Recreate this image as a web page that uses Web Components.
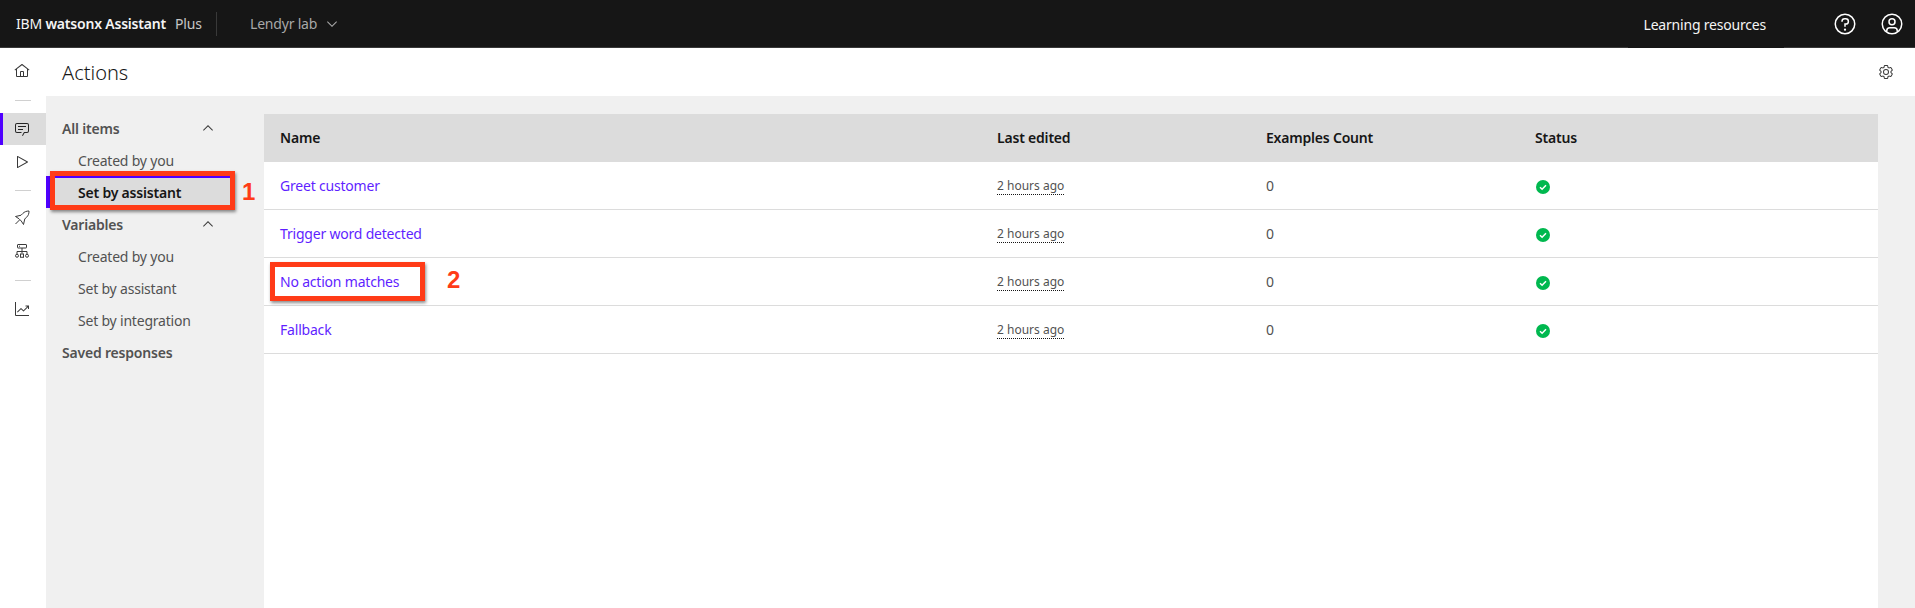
<!DOCTYPE html>
<html lang="en">
<head>
<meta charset="utf-8">
<title>Actions</title>
<style>
  html, body { margin: 0; height: 100%; }
  body { font-family: "Noto Sans", "Liberation Sans", sans-serif; font-size: 14px; letter-spacing: -0.2px; color: #161616; overflow: hidden; }
</style>
</head>
<body>
<wa-app>
  <wa-header slot="header"></wa-header>
  <wa-rail slot="rail">
    <wa-rail-item icon="home"></wa-rail-item>
    <wa-rail-divider></wa-rail-divider>
    <wa-rail-item icon="chat" active></wa-rail-item>
    <wa-rail-item icon="play"></wa-rail-item>
    <wa-rail-divider tight></wa-rail-divider>
    <wa-rail-item icon="rocket"></wa-rail-item>
    <wa-rail-item icon="hierarchy"></wa-rail-item>
    <wa-rail-divider></wa-rail-divider>
    <wa-rail-item icon="chart"></wa-rail-item>
  </wa-rail>
  <wa-titlebar slot="title">Actions</wa-titlebar>
  <wa-nav slot="nav">
    <wa-nav-group open>All items</wa-nav-group>
    <wa-nav-item>Created by you</wa-nav-item>
    <wa-nav-item active>Set by assistant</wa-nav-item>
    <wa-nav-group open>Variables</wa-nav-group>
    <wa-nav-item>Created by you</wa-nav-item>
    <wa-nav-item>Set by assistant</wa-nav-item>
    <wa-nav-item>Set by integration</wa-nav-item>
    <wa-nav-group>Saved responses</wa-nav-group>
  </wa-nav>
  <wa-table slot="main">
    <wa-row head><span>Name</span><span>Last edited</span><span>Examples Count</span><span>Status</span></wa-row>
    <wa-row><wa-link>Greet customer</wa-link><wa-time>2 hours ago</wa-time><span>0</span><wa-status></wa-status></wa-row>
    <wa-row><wa-link>Trigger word detected</wa-link><wa-time>2 hours ago</wa-time><span>0</span><wa-status></wa-status></wa-row>
    <wa-row><wa-link>No action matches</wa-link><wa-time>2 hours ago</wa-time><span>0</span><wa-status></wa-status></wa-row>
    <wa-row><wa-link>Fallback</wa-link><wa-time>2 hours ago</wa-time><span>0</span><wa-status></wa-status></wa-row>
  </wa-table>
</wa-app>
<wa-callout label="1" style="left:50px;top:171px;width:185px;height:39px;--label-left:187px;--label-top:2px"></wa-callout>
<wa-callout label="2" style="left:270px;top:262px;width:155px;height:39px;--label-left:172px;--label-top:-1px"></wa-callout>

<script>
const ICONS = {
  home: '<path d="M16.6123,2.2138a1.01,1.01,0,0,0-1.2427,0L1,13.4194l1.2427,1.5717L4,13.6209V26a2.0041,2.0041,0,0,0,2,2H26a2.0037,2.0037,0,0,0,2-2V13.63L29.7573,15,31,13.4282ZM18,26H14V18h4Zm2,0V18a2.0023,2.0023,0,0,0-2-2H14a2.002,2.002,0,0,0-2,2v8H6V12.0615l10-7.79,10,7.8005V26Z"/>',
  chat: '<path d="M17.74,30,16,29l4-7h6a2,2,0,0,0,2-2V8a2,2,0,0,0-2-2H6A2,2,0,0,0,4,8V20a2,2,0,0,0,2,2h9v2H6a4,4,0,0,1-4-4V8A4,4,0,0,1,6,4H26a4,4,0,0,1,4,4V20a4,4,0,0,1-4,4H21.16Z"/><path d="M8,10h16v2H8z"/><path d="M8,16h10v2H8z"/>',
  play: '<path d="M7,28a1,1,0,0,1-1-1V5a1,1,0,0,1,1.4819-.8763l20,11a1,1,0,0,1,0,1.7525l-20,11A1.0005,1.0005,0,0,1,7,28ZM8,6.6909V25.3091L24.9248,16Z"/>',
  rocket: '<path fill="none" stroke="currentColor" stroke-width="2" stroke-linejoin="round" d="M30 2c-5 0-9 1.500-12.500 5L14 10.500 3 13l7 4.500 4.500 4.500 4.500 7 2.500-11 3.500-3.500C29 11 30 7 30 2Z"/><path fill="none" stroke="currentColor" stroke-width="2" d="M3 28l8-8"/>',
  hierarchy: '<g fill="none" stroke="currentColor" stroke-width="2"><rect x="7" y="3" width="18" height="7" rx="1"/><path d="M16 10v11M6 22v-5h20v5"/><circle cx="6" cy="25.500" r="3"/><rect x="13" y="22" width="6" height="6.500"/><circle cx="26" cy="25.500" r="3"/></g><path d="M10 5.500h2v2h-2z"/>',
  chart: '<path d="M4,2H2V28a2,2,0,0,0,2,2H30V28H4Z"/><path d="M30,9H23v2h3.59L19,18.59l-4.29-4.3a1,1,0,0,0-1.42,0L6,21.59,7.41,23,14,16.41l4.29,4.3a1,1,0,0,0,1.42,0L28,12.41V16h2Z"/>',
  chevronDown: '<path d="M16 22L6 12l1.4-1.4 8.6 8.6 8.6-8.6L26 12z"/>',
  chevronUp: '<path d="M16 10L26 20l-1.4 1.400-8.600-8.600-8.600 8.600L6 20z"/>',
  help: '<path d="M16,2A14,14,0,1,0,30,16,14,14,0,0,0,16,2Zm0,26A12,12,0,1,1,28,16,12,12,0,0,1,16,28Z"/><circle cx="16" cy="23.5" r="1.5"/><path d="M17,8H15.5A4.49,4.49,0,0,0,11,12.5V13h2v-.5A2.5,2.5,0,0,1,15.5,10H17a2.5,2.5,0,0,1,0,5H15v4.5h2V17a4.5,4.5,0,0,0,0-9Z"/>',
  user: '<path d="M16,8a5,5,0,1,0,5,5A5,5,0,0,0,16,8Zm0,8a3,3,0,1,1,3-3A3.0034,3.0034,0,0,1,16,16Z"/><path d="M16,2A14,14,0,1,0,30,16,14.0158,14.0158,0,0,0,16,2ZM10,26.3765V25a3.0033,3.0033,0,0,1,3-3h6a3.0033,3.0033,0,0,1,3,3v1.3765a11.8989,11.8989,0,0,1-12,0Zm13.9925-1.4507A5.0016,5.0016,0,0,0,19,20H13a5.0016,5.0016,0,0,0-4.9925,4.9258,12,12,0,1,1,15.985,0Z"/>',
  settings: '<path d="M27,16.76c0-.25,0-.5,0-.76s0-.51,0-.77l1.92-1.68A2,2,0,0,0,29.3,11L26.94,7a2,2,0,0,0-1.73-1,2,2,0,0,0-.64.1l-2.43.82a11.35,11.35,0,0,0-1.31-.75l-.51-2.52a2,2,0,0,0-2-1.61H13.64a2,2,0,0,0-2,1.61l-.51,2.52a11.48,11.48,0,0,0-1.32.75L7.43,6.06A2,2,0,0,0,6.79,6,2,2,0,0,0,5.06,7L2.7,11a2,2,0,0,0,.41,2.51L5,15.24c0,.25,0,.5,0,.76s0,.51,0,.77L3.11,18.45A2,2,0,0,0,2.7,21L5.06,25a2,2,0,0,0,1.73,1,2,2,0,0,0,.64-.1l2.43-.82a11.35,11.35,0,0,0,1.31.75l.51,2.52a2,2,0,0,0,2,1.61h4.72a2,2,0,0,0,2-1.61l.51-2.52a11.48,11.48,0,0,0,1.32-.75l2.42.82a2,2,0,0,0,.64.1,2,2,0,0,0,1.73-1L29.3,21a2,2,0,0,0-.41-2.51ZM25.21,24l-3.43-1.16a8.86,8.86,0,0,1-2.71,1.57L18.36,28H13.64l-.71-3.55a9.36,9.36,0,0,1-2.7-1.57L6.79,24,4.43,20l2.72-2.4a8.9,8.9,0,0,1,0-3.13L4.43,12,6.79,8l3.43,1.16a8.86,8.86,0,0,1,2.71-1.57L13.64,4h4.72l.71,3.55a9.36,9.36,0,0,1,2.7,1.57L25.21,8,27.57,12l-2.72,2.4a8.9,8.9,0,0,1,0,3.13L27.57,20Z"/><path d="M16,22a6,6,0,1,1,6-6A5.94,5.94,0,0,1,16,22Zm0-10a3.91,3.91,0,0,0-4,4,3.91,3.91,0,0,0,4,4,3.91,3.91,0,0,0,4-4A3.91,3.91,0,0,0,16,12Z"/>'
};

// small helper, every element below is just a template + shadow root
function define(tag, html, extra) {
  const template = document.createElement("template");
  template.innerHTML = html;
  class El extends HTMLElement {
    constructor() {
      super();
      this.attachShadow({ mode: "open" });
    }
    connectedCallback() {
      const clone = template.content.cloneNode(true);
      // attributes go on the clone first, nested elements read them once connected
      if (extra) extra(this, clone);
      this.shadowRoot.append(clone);
    }
  }
  customElements.define(tag, El);
}

define("wa-icon", `
  <style>
    :host { display: inline-flex; width: var(--icon-size, 16px); height: var(--icon-size, 16px); flex: none; }
    svg { width: 100%; height: 100%; fill: currentColor; display: block; }
  </style>
  <svg viewBox="0 0 32 32" aria-hidden="true"></svg>
`, (el, root) => {
  root.querySelector("svg").innerHTML = ICONS[el.getAttribute("name")] || "";
});

define("wa-app", `
  <style>
    :host { display: grid; grid-template-columns: 46px 1fr; grid-template-rows: 48px 48px 1fr; height: 608px; background: #fff; }
    .header { grid-column: 1 / 3; }
    .rail { grid-row: 2 / 4; }
    .body { display: grid; grid-template-columns: 218px 1fr; background: #f0f0f0; padding-right: 37px; min-height: 0; }
    .main { padding-top: 18px; display: flex; flex-direction: column; min-height: 0; }
  </style>
  <div class="header"><slot name="header"></slot></div>
  <div class="rail"><slot name="rail"></slot></div>
  <div><slot name="title"></slot></div>
  <div class="body">
    <div><slot name="nav"></slot></div>
    <div class="main"><slot name="main"></slot></div>
  </div>
`);

define("wa-header", `
  <style>
    :host { display: flex; align-items: stretch; height: 48px; box-sizing: border-box; background: #161616; border-bottom: 1px solid #393939; color: #f4f4f4; font-size: 14px; }
    .brand { display: flex; align-items: center; padding-left: 16px; width: 200px; box-sizing: border-box; white-space: nowrap; }
    .brand b { font-weight: 600; }
    .plan { margin-left: 9px; color: #c6c6c6; }
    .sep { width: 1px; height: 24px; background: #393939; align-self: center; margin-left: 16px; }
    .workspace { display: flex; align-items: center; gap: 7px; margin-left: 33px; color: #a8a8a8; flex: 1; }
    .learn { display: flex; align-items: center; height: 48px; padding: 0 18px 0 16px; background: #161616; }
    .btn { display: flex; align-items: center; justify-content: center; width: 47px; height: 47px; --icon-size: 24px; color: #fff; }
  </style>
  <div class="brand"><span>IBM <b>watsonx Assistant</b></span><span class="plan">Plus</span></div>
  <div class="sep"></div>
  <div class="workspace"><span>Lendyr lab</span><wa-icon name="chevronDown"></wa-icon></div>
  <div class="learn">Learning resources</div>
  <div class="btn" style="margin-left:37px"><wa-icon name="help"></wa-icon></div>
  <div class="btn"><wa-icon name="user"></wa-icon></div>
`);

define("wa-rail", `
  <style>
    :host { display: flex; flex-direction: column; gap: 1px; padding-top: 7px; background: #fff; }
  </style>
  <slot></slot>
`);

define("wa-rail-item", `
  <style>
    :host { display: flex; align-items: center; justify-content: center; height: 32px; padding-right: 2px; color: #393939; box-sizing: border-box; }
    :host([active]) { background: #dcdcdc; border-left: 3px solid #4f00ff; padding-right: 5px; color: #262626; }
  </style>
  <wa-icon></wa-icon>
`, (el, root) => {
  root.querySelector("wa-icon").setAttribute("name", el.getAttribute("icon"));
});

define("wa-rail-divider", `
  <style>
    :host { display: flex; align-items: center; justify-content: center; height: 24px; padding-right: 0; }
    :host([tight]) { height: 22px; }
    i { display: block; width: 16px; height: 1px; background: #d0d0d0; }
  </style>
  <i></i>
`);

define("wa-titlebar", `
  <style>
    :host { display: flex; align-items: center; justify-content: space-between; height: 48px; padding: 0 21px 0 16px; font-size: 20px; font-weight: 300; letter-spacing: 0; color: #161616; background: #fff; }
    wa-icon { color: #393939; }
  </style>
  <span><slot></slot></span>
  <wa-icon name="settings"></wa-icon>
`);

define("wa-nav", `
  <style>
    :host { display: block; padding-top: 16px; width: 186px; }
  </style>
  <slot></slot>
`);

define("wa-nav-group", `
  <style>
    :host { display: flex; align-items: center; justify-content: space-between; height: 32px; padding: 0 16px; font-weight: 600; color: #525252; }
    wa-icon { display: none; color: #393939; }
    :host([open]) wa-icon { display: inline-flex; }
  </style>
  <span><slot></slot></span>
  <wa-icon name="chevronUp"></wa-icon>
`);

define("wa-nav-item", `
  <style>
    :host { display: flex; align-items: center; height: 32px; padding-left: 32px; color: #525252; box-sizing: border-box; }
    :host([active]) { background: #dcdcdc; padding-left: 28px; border-left: 4px solid #4f00ff; box-shadow: inset 0 2px 0 #4f00ff; font-weight: 600; color: #161616; }
  </style>
  <slot></slot>
`);

define("wa-table", `
  <style>
    :host { display: block; flex: 1; background: #fff; }
  </style>
  <slot></slot>
`);

define("wa-row", `
  <style>
    :host { display: grid; grid-template-columns: 717px 269px 269px 1fr; align-items: center; height: 48px; box-sizing: border-box; padding-left: 16px; border-bottom: 1px solid #dcdcdc; color: #525252; }
    :host([head]) { background: #dcdcdc; font-weight: 600; color: #161616; }
  </style>
  <slot></slot>
`);

define("wa-link", `
  <style>
    :host { display: inline; color: #5f1fff; }
  </style>
  <slot></slot>
`);

define("wa-time", `
  <style>
    :host { justify-self: start; color: #525252; font-size: 12px; letter-spacing: 0; border-bottom: 1px dotted #161616; line-height: 16px; margin-top: 2px; }
  </style>
  <slot></slot>
`);

define("wa-status", `
  <style>
    :host { display: flex; width: 16px; height: 16px; margin-top: 2px; }
    svg { width: 16px; height: 16px; display: block; }
  </style>
  <svg viewBox="0 0 16 16" aria-label="Ready"><circle cx="8" cy="8" r="7" fill="#00b84f"/><path d="M5 8.200l2.100 2L11 6.200" fill="none" stroke="#fff" stroke-width="1.500"/></svg>
`);

define("wa-callout", `
  <style>
    :host { position: absolute; box-sizing: border-box; border: 5px solid #ff3b17; box-shadow: 1px 2px 3px rgba(0,0,0,.45); }
    span { position: absolute; left: var(--label-left); top: var(--label-top); font-family: "Liberation Sans", Arial, sans-serif; font-size: 24px; font-weight: 700; line-height: 28px; color: #ff3b17; }
  </style>
  <span></span>
`, (el, root) => {
  root.querySelector("span").textContent = el.getAttribute("label");
});
</script>
</body>
</html>
